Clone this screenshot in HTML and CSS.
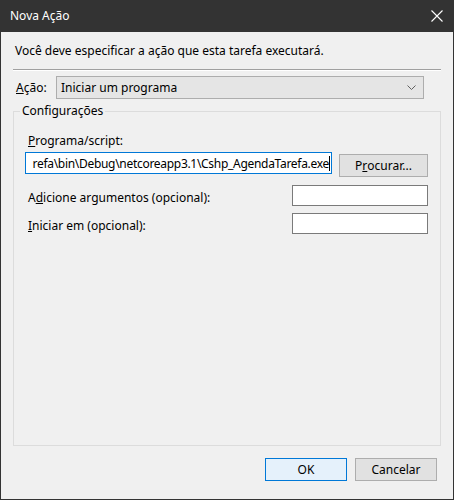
FILE: index.html
```html
<!DOCTYPE html>
<html lang="pt-BR">
  <head>
    <meta charset="UTF-8" />
    <title>Nova Ação</title>
    <link rel="stylesheet" href="styles.css">
  </head>
  <body>
    <div class="window">
      <div class="titlebar">
        <span class="title">Nova Ação</span>
        <svg class="close" width="12" height="12" viewBox="0 0 12 12">
          <path d="M0.5 0.5 L11.5 11.5 M11.5 0.5 L0.5 11.5" stroke="#ffffff" stroke-width="1.1" fill="none" />
        </svg>
      </div>
      <div class="content">
        <div class="intro">Você deve especificar a ação que esta tarefa executará.</div>
        <div class="separator"></div>
        <div class="action-row">
          <span class="label"><u>A</u>ção:</span>
          <div class="select">
            <span>Iniciar um programa</span>
            <svg width="9" height="6" viewBox="0 0 9 6">
              <path d="M0.5 0.5 L4.5 4.5 L8.5 0.5" stroke="#606060" stroke-width="1" fill="none" />
            </svg>
          </div>
        </div>
        <fieldset class="group">
          <legend>Configurações</legend>
          <div class="field-label"><u>P</u>rograma/script:</div>
          <div class="program-row">
            <div class="textbox focused">
              <span class="path">refa\bin\Debug\netcoreapp3.1\Cshp_AgendaTarefa.exe</span><span class="caret"></span>
            </div>
            <div class="button browse">P<u>r</u>ocurar...</div>
          </div>
          <div class="option-row args">
            <span class="option-label">A<u>d</u>icione argumentos (opcional):</span>
            <div class="textbox small"></div>
          </div>
          <div class="option-row start">
            <span class="option-label"><u>I</u>niciar em (opcional):</span>
            <div class="textbox small"></div>
          </div>
        </fieldset>
        <div class="buttons">
          <div class="button ok">OK</div>
          <div class="button">Cancelar</div>
        </div>
      </div>
    </div>
  </body>
</html>
```

FILE: styles.css
```css
body {
    margin: 0;
    background: #ffffff;
    font-family: "Noto Sans", "Open Sans", sans-serif;
    font-size: 12px;
    color: #000000;
}
.window {
    width: 454px;
    height: 500px;
    box-sizing: border-box;
    border: 1px solid #333333;
    border-top: none;
    background: #f0f0f0;
    display: flex;
    flex-direction: column;
}
.titlebar {
    height: 32px;
    background: #333333;
    color: #ffffff;
    display: flex;
    align-items: center;
    justify-content: space-between;
    padding: 0 10px 0 9px;
    flex-shrink: 0;
}
.title {
    margin-top: -2px;
}
.close {
    margin-top: -1px;
}
.content {
    flex: 1;
    display: flex;
    flex-direction: column;
    padding: 10px 12px 0 12px;
}
.intro {
    padding-left: 2px;
    height: 17px;
    line-height: 17px;
}
.separator {
    margin-top: 10px;
    height: 1px;
    background: #a0a0a0;
    border-bottom: 1px solid #ffffff;
    width: 428px;
}
.action-row {
    display: flex;
    align-items: center;
    margin-top: 5px;
}
.label {
    width: 40px;
    padding-left: 3px;
}
.select {
    width: 368px;
    height: 23px;
    box-sizing: border-box;
    background: #e5e5e5;
    border: 1px solid #adadad;
    display: flex;
    align-items: center;
    justify-content: space-between;
    padding: 0 7px 0 4px;
}
.select svg {
    margin-top: 1px;
}
.group {
    margin: 5px 0 0 0;
    width: 428px;
    height: 342px;
    box-sizing: border-box;
    border: 1px solid #dcdcdc;
    padding: 14px 12px 0 11px;
}
.group legend {
    padding: 0 2px;
    margin-left: -5px;
    line-height: 14px;
}
.field-label {
    margin-left: 3px;
    line-height: 17px;
}
.program-row {
    display: flex;
    align-items: flex-start;
    margin-top: 3px;
}
.textbox {
    background: #ffffff;
    border: 1px solid #7a7a7a;
    box-sizing: border-box;
}
.textbox.focused {
    width: 307px;
    height: 22px;
    border-color: #0078d7;
    display: flex;
    justify-content: flex-end;
    align-items: center;
    overflow: hidden;
    white-space: nowrap;
    padding-right: 1px;
}
.caret {
    flex-shrink: 0;
    width: 1px;
    height: 15px;
    background: #000000;
}
.path {
    flex-shrink: 0;
    letter-spacing: -0.3px;
}
.button {
    width: 82px;
    height: 23px;
    box-sizing: border-box;
    background: #e1e1e1;
    border: 1px solid #adadad;
    display: flex;
    align-items: center;
    justify-content: center;
}
.browse {
    width: 89px;
    margin-left: 7px;
    margin-top: 2px;
}
.option-row {
    display: flex;
    justify-content: space-between;
    align-items: center;
    margin-left: 3px;
}
.args {
    margin-top: 7px;
}
.start {
    margin-top: 6px;
}
.option-label {
    margin-top: 5px;
}
.textbox.small {
    width: 136px;
    height: 21px;
}
.buttons {
    display: flex;
    justify-content: flex-end;
    gap: 8px;
    margin-top: 12px;
    padding-right: 4px;
}
.ok {
    background: #e5f1fb;
    border-color: #0078d7;
}
```
